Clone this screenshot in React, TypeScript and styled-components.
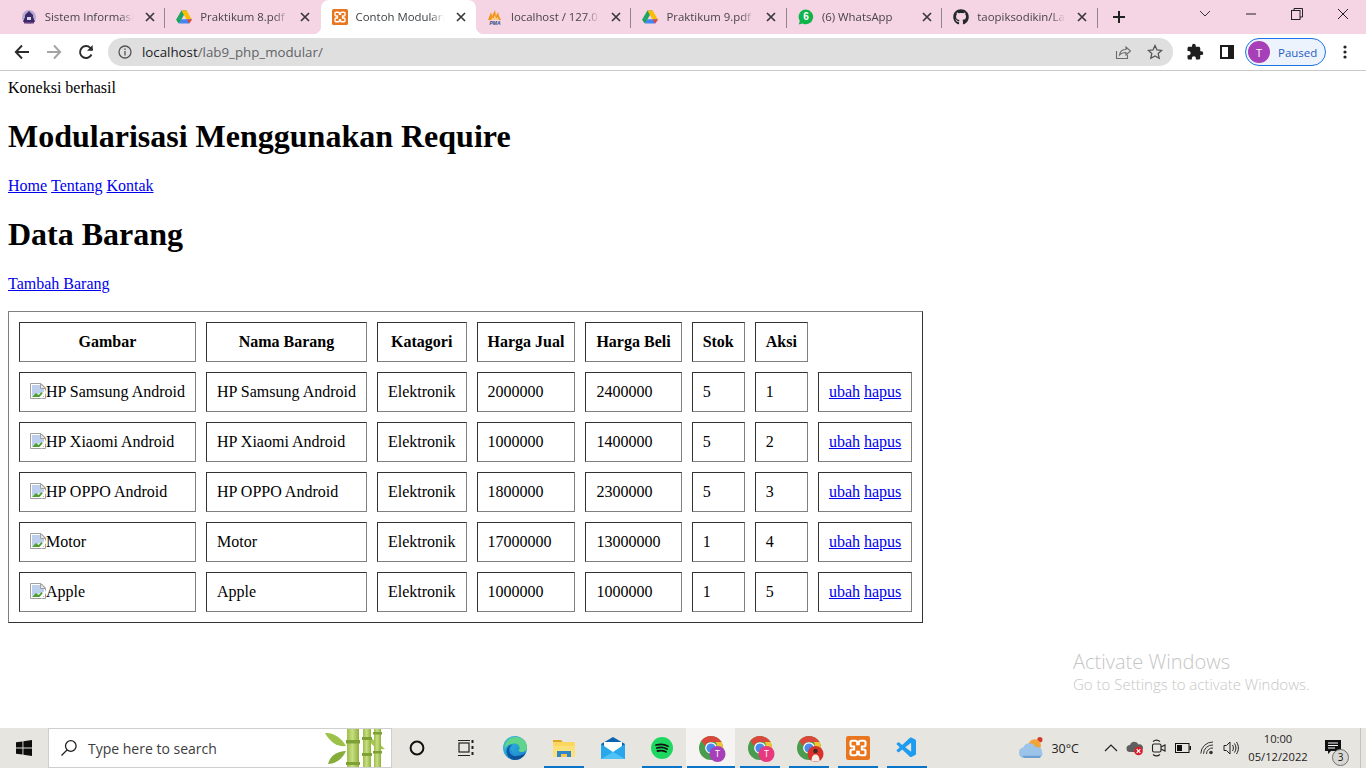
import React from "react";
import styled, { createGlobalStyle } from "styled-components";
import { FaGithub } from "react-icons/fa";
import { MdExtension } from "react-icons/md";
import { VscVscode } from "react-icons/vsc";

const UI = `"Open Sans", "Noto Sans", "Liberation Sans", sans-serif`;

const Global = createGlobalStyle`
  html, body { margin: 0; padding: 0; height: 100%; overflow: hidden; background: #fff; }
  #root { height: 100%; }
`;

const Screen = styled.div`
  position: relative;
  display: flex;
  flex-direction: column;
  width: 1366px;
  height: 768px;
  overflow: hidden;
`;

const TabStrip = styled.div`
  display: flex;
  align-items: stretch;
  height: 34px;
  padding-left: 9.7px;
  background: #f5d4e4;
  font-family: ${UI};
`;

const Tab = styled.div<{ $active?: boolean; $sep?: boolean }>`
  position: relative;
  flex: 0 0 155.45px;
  min-width: 0;
  box-sizing: border-box;
  display: flex;
  align-items: center;
  padding: 0 7.45px 0 11px;
  gap: 8px;
  background: ${(p) => (p.$active ? "#fff" : "transparent")};
  border-radius: 8px 8px 0 0;
  ${(p) =>
    p.$sep
      ? `&::after { content: ""; position: absolute; right: 0; top: 8px; width: 1px; height: 20px; background: #8f868b; }`
      : ""}
  ${(p) =>
    p.$active
      ? `&::before { content: ""; position: absolute; left: -8px; right: -8px; bottom: 0; height: 8px; z-index: 0;
           background:
             radial-gradient(circle at 0 0, #f5d4e4 8px, #fff 8.5px) left bottom / 8px 8px no-repeat,
             radial-gradient(circle at 100% 0, #f5d4e4 8px, #fff 8.5px) right bottom / 8px 8px no-repeat; }`
      : ""}
`;

const TabTitle = styled.span<{ $active?: boolean }>`
  position: relative;
  z-index: 1;
  flex: 1;
  min-width: 0;
  overflow: hidden;
  white-space: nowrap;
  font-size: 11.4px;
  line-height: 16px;
  color: ${(p) => (p.$active ? "#3c4043" : "#48444c")};
  -webkit-mask-image: linear-gradient(90deg, #000 84%, transparent 99%);
  mask-image: linear-gradient(90deg, #000 84%, transparent 99%);
`;

const IconSlot = styled.span`
  position: relative;
  z-index: 1;
  flex: 0 0 16px;
  width: 16px;
  height: 16px;
  display: flex;
  align-items: center;
  justify-content: center;
`;

const NewTab = styled.div`
  flex: 0 0 42px;
  display: flex;
  align-items: center;
  justify-content: center;
`;

const WindowControls = styled.div`
  margin-left: auto;
  display: flex;
  align-items: flex-start;
`;

const WindowButton = styled.div`
  width: 46px;
  height: 28px;
  display: flex;
  align-items: center;
  justify-content: center;
`;

const Toolbar = styled.div`
  flex: 0 0 37px;
  box-sizing: border-box;
  height: 37px;
  display: flex;
  align-items: flex-start;
  padding-top: 4px;
  background: #fff;
  border-bottom: 1px solid #c9c9c9;
  font-family: ${UI};
`;

const NavButton = styled.div`
  flex: 0 0 32px;
  height: 28px;
  display: flex;
  align-items: center;
  justify-content: center;
`;

const NavGroup = styled.div`
  display: flex;
  padding-left: 6px;
  width: 102px;
`;

const Omnibox = styled.div`
  flex: 0 0 1065px;
  height: 28px;
  box-sizing: border-box;
  display: flex;
  align-items: center;
  padding: 0 2px 0 10px;
  background: #dfdfdf;
  border-radius: 14px;
`;

const Url = styled.span`
  flex: 1;
  margin-left: 10px;
  font-size: 13.3px;
  color: #5f6368;
  white-space: nowrap;
`;

const UrlHost = styled.span`
  color: #202124;
`;

const OmniAction = styled.div`
  width: 32px;
  height: 28px;
  display: flex;
  align-items: center;
  justify-content: center;
`;

const ToolGroup = styled.div`
  display: flex;
  align-items: center;
  padding-left: 6px;
`;

const ProfilePill = styled.div`
  margin-left: 2px;
  width: 81px;
  height: 28px;
  box-sizing: border-box;
  display: flex;
  align-items: center;
  gap: 8px;
  padding-left: 2px;
  background: #ecf3fc;
  border: 1px solid #1a73e8;
  border-radius: 14px;
  font-size: 11.5px;
  color: #1f5fbf;
`;

const Avatar = styled.span<{ $bg: string; $size: number }>`
  width: ${(p) => p.$size}px;
  height: ${(p) => p.$size}px;
  flex: 0 0 auto;
  border-radius: 50%;
  background: ${(p) => p.$bg};
  color: #fff;
  font-size: ${(p) => Math.round(p.$size * 0.52)}px;
  display: flex;
  align-items: center;
  justify-content: center;
`;

const MenuButton = styled.div`
  margin-left: 3px;
  width: 32px;
  height: 28px;
  display: flex;
  align-items: center;
  justify-content: center;
`;

const Page = styled.main`
  flex: 1;
  padding: 8px;
  background: #fff;
  color: #000;
  font-family: "Liberation Serif", "Times New Roman", serif;
  font-size: 16px;
`;

const Notice = styled.div``;

const Heading = styled.h1`
  font-size: 32px;
  font-weight: 700;
  margin: 21.44px 0;
`;

const Nav = styled.nav`
  display: flex;
  gap: 4px;
`;

const TextLink = styled.a`
  color: #0000ee;
  text-decoration: underline;
`;

const AddRow = styled.div`
  margin-bottom: 18px;
`;

const DataTable = styled.table`
  border-collapse: separate;
  border-spacing: 10px;
  border-style: solid;
  border-width: 1px;
  border-color: #808080 #333 #333 #808080;
`;

const HeadCell = styled.th`
  padding: 10px;
  font-weight: 700;
  text-align: center;
  border-style: solid;
  border-width: 1px;
  border-color: #333 #808080 #808080 #333;
`;

const Cell = styled.td`
  padding: 10px;
  white-space: nowrap;
  border-style: solid;
  border-width: 1px;
  border-color: #333 #808080 #808080 #333;
`;

const LinkPair = styled.span`
  display: inline-flex;
  gap: 4px;
`;

const Broken = styled.svg`
  width: 16px;
  height: 16px;
  vertical-align: -2px;
`;

const Watermark = styled.div`
  position: absolute;
  left: 1073px;
  top: 649px;
  color: #c6c6c6;
  font-family: ${UI};
  font-weight: 300;
`;

const WatermarkTitle = styled.div`
  font-size: 20px;
  line-height: 26px;
`;

const WatermarkSub = styled.div`
  font-size: 15px;
  line-height: 19px;
`;

const Taskbar = styled.footer`
  flex: 0 0 40px;
  height: 40px;
  display: flex;
  align-items: stretch;
  background: #e7e5e0;
  font-family: ${UI};
`;

const StartButton = styled.div`
  flex: 0 0 48px;
  display: flex;
  align-items: center;
  justify-content: center;
`;

const SearchBox = styled.div`
  position: relative;
  flex: 0 0 344px;
  box-sizing: border-box;
  display: flex;
  align-items: center;
  gap: 10px;
  padding-left: 11px;
  background: #fff;
  border: 1px solid #cfcfcf;
  overflow: hidden;
  font-size: 14px;
  color: #3d3d3d;
`;

const Bamboo = styled.svg`
  position: absolute;
  right: 4px;
  top: 0;
`;

const TaskSlot = styled.div<{ $active?: boolean; $open?: boolean }>`
  position: relative;
  flex: 0 0 49px;
  display: flex;
  align-items: center;
  justify-content: center;
  background: ${(p) => (p.$active ? "#f5f4f2" : "transparent")};
  ${(p) =>
    p.$open
      ? `&::after { content: ""; position: absolute; bottom: 0; height: 2px; left: ${p.$active ? 1 : 5}px; right: ${p.$active ? 0 : 4}px; background: #0a74c9; }`
      : ""}
`;

const Tray = styled.div`
  margin-left: auto;
  display: flex;
  align-items: center;
`;

const Weather = styled.div`
  display: flex;
  align-items: center;
  gap: 8px;
  margin-right: 20px;
  font-size: 12.5px;
  color: #222;
`;

const TrayIcon = styled.div`
  width: 24px;
  height: 40px;
  display: flex;
  align-items: center;
  justify-content: center;
`;

const Clock = styled.div`
  width: 80px;
  margin: 0 7px 0 -5px;
  text-align: center;
  font-size: 11.2px;
  line-height: 18px;
  color: #222;
`;

const Notification = styled.div`
  position: relative;
  width: 35px;
  height: 100%;
  border-right: 1px solid #c4c2be;
  margin-right: 5px;
`;

const NotifyBadge = styled.span`
  position: absolute;
  left: 7px;
  top: 21px;
  width: 15px;
  height: 15px;
  border-radius: 50%;
  background: #d9d7d3;
  border: 1px solid #6f6f6f;
  font-size: 10px;
  line-height: 15px;
  text-align: center;
  color: #111;
`;

const NotifyGlyph = styled.svg`
  position: absolute;
  left: 0;
  top: 12px;
`;

const Close = () => (
  <svg width="16" height="16" viewBox="0 0 16 16">
    <path d="M4 4l8 8M12 4l-8 8" stroke="#3a383c" strokeWidth="1.7" />
  </svg>
);

const Campus = () => (
  <svg width="16" height="16" viewBox="0 0 16 16">
    <circle cx="8" cy="8" r="7" fill="#b7a9cf" />
    <path d="M8 2l4 4v2l2 5H2l2-5V6z" fill="#3b2a6b" />
    <path d="M6 8h4v3H6z" fill="#d9d3e6" />
    <path d="M3 13h10v1.5H3z" fill="#6a3d7c" />
  </svg>
);

const Drive = () => (
  <svg width="16" height="16" viewBox="0 0 16 16">
    <path d="M5.4 1.5h5.2L5.200 10.700H0z" fill="#1fa463" />
    <path d="M5.4 1.5h5.2L16 10.700h-5.300z" fill="#fbbc04" />
    <path d="M3 14.500h10l3-4.300H5.400z" fill="#4285f4" />
    <path d="M0 10.500L2.700 14.500 5.600 10.500z" fill="#0f9d58" />
    <path d="M10.600 10.400h5.400l-2.800 4.100z" fill="#ea4335" />
  </svg>
);

const Xampp = ({ s = 16 }: { s?: number }) => (
  <svg width={s} height={s} viewBox="0 0 16 16">
    <rect width="16" height="16" rx="1.500" fill="#e8761f" />
    <path
      d="M4 3.200h2.200a1.300 1.300 0 0 1 1.300 1.200v1h1v-1a1.300 1.300 0 0 1 1.300-1.200H12a1 1 0 0 1 1 1v1.600a1.200 1.200 0 0 1-1.200 1.200H10.600v2h1.200a1.200 1.200 0 0 1 1.200 1.200v1.600a1 1 0 0 1-1 1H9.800a1.300 1.300 0 0 1-1.300-1.200v-1h-1v1a1.300 1.300 0 0 1-1.300 1.200H4a1 1 0 0 1-1-1v-1.600A1.200 1.200 0 0 1 4.200 9h1.200V7H4.200A1.200 1.200 0 0 1 3 5.800V4.200a1 1 0 0 1 1-1z"
      fill="none"
      stroke="#fff"
      strokeWidth="1.400"
    />
  </svg>
);

const Pma = () => (
  <svg width="16" height="16" viewBox="0 0 16 16">
    <path d="M1 11L4 3l1 4 3-6 1 6 2-4 1 4 2 4z" fill="#f29419" />
    <path d="M4 11l1.500-3 1 1.500L8 6l1 3.500L10.500 8l1.500 3z" fill="#fbd08a" />
    <text x="8" y="15.500" fontSize="5" fontWeight="700" fontStyle="italic" textAnchor="middle" fill="#2b4a7e" fontFamily="Liberation Sans, sans-serif">PMA</text>
  </svg>
);

const WhatsApp = () => (
  <svg width="16" height="16" viewBox="0 0 16 16">
    <path d="M8 .6a7.300 7.300 0 0 0-6.200 11.200L.8 15.400l3.700-1A7.300 7.300 0 1 0 8 .6z" fill="#0fb44a" />
    <text x="8" y="11.300" fontSize="10" fontWeight="700" textAnchor="middle" fill="#fff" fontFamily="Liberation Sans, sans-serif">6</text>
  </svg>
);

const BrokenImage = () => (
  <Broken viewBox="0 0 16 16">
    <path d="M.5.500h10.500l4.500 4.500v10.500H.5z" fill="#fff" stroke="#a0a0a0" />
    <path d="M2 2h8l4 4v3l-4 1-8 3z" fill="#bcd0ee" />
    <path d="M2 14l4-4 2.500 2 3-3 2.500 2.500V14z" fill="#4f9e34" />
    <path d="M10.500 .5v5h5z" fill="#e8e8e8" stroke="#a0a0a0" />
    <path d="M9 14.500l6.500-7.500.5 3-4 5.500z" fill="#fff" />
  </Broken>
);

const Windows = () => (
  <svg width="16" height="16" viewBox="0 0 16 16">
    <path d="M0 2.300l6.500-.9v6.100H0zM7.400 1.300L16 0v7.500H7.400zM0 8.400h6.500v6.200L0 13.700zM7.400 8.400H16V16l-8.600-1.200z" fill="#0d0d0d" />
  </svg>
);

const Edge = () => (
  <svg width="24" height="24" viewBox="0 0 24 24">
    <defs>
      <linearGradient id="edgeA" x1="0" y1="0" x2="1" y2="1">
        <stop offset="0" stopColor="#35c1d8" />
        <stop offset="1" stopColor="#1b7fd1" />
      </linearGradient>
      <linearGradient id="edgeB" x1="0" y1="0" x2="1" y2="0">
        <stop offset="0" stopColor="#0c59a4" />
        <stop offset="1" stopColor="#114a8b" />
      </linearGradient>
    </defs>
    <circle cx="12" cy="12" r="12" fill="url(#edgeA)" />
    <path d="M13 1c6 0 11 4.500 11 10.500 0 3-2.500 4.500-5 4.500-2 0-3.500-.6-3.500-1.500 2-1 1.600-7-4-7C7 7.500 3 10 1.500 13 1 6 6 1 13 1z" fill="#5fd48a" />
    <path d="M22.500 17c-2 4-6 7-10.500 7-5 0-8.500-4-8.500-9 0-3 2.500-6.500 6-6.500-2 2-2.200 5.500-.5 8 2 3 7 5 13.500.5z" fill="url(#edgeB)" />
    <path d="M9.500 8.500c-2 2-2.200 5.500-.5 8 1 1.500 3 3 6 3.300-4 1.500-7.500-1-8.500-4C5.700 12.500 7 9.500 9.500 8.500z" fill="#2596df" />
  </svg>
);

const Folder = () => (
  <svg width="22" height="22" viewBox="0 0 22 22">
    <path d="M0 3h8l2 2.500H0z" fill="#e0a526" />
    <rect x="0" y="5" width="22" height="15" rx="1" fill="#fbd75f" />
    <path d="M0 9h22v11H0z" fill="#fce07a" />
    <path d="M4 14h14v6h-4v-3H8v3H4z" fill="#2f86c9" />
    <path d="M8 17h6v3H8z" fill="#f5c84a" />
  </svg>
);

const Mail = () => (
  <svg width="24" height="22" viewBox="0 0 24 22">
    <path d="M0 7L12 0l12 7v15H0z" fill="#0b63ad" />
    <path d="M3 5h18v8l-9 5-9-5z" fill="#fff" />
    <path d="M0 7l12 8 12-8v15H0z" fill="#28a8ea" />
    <path d="M0 22L12 15l12 7z" fill="#4fc3f7" />
  </svg>
);

const Spotify = () => (
  <svg width="22" height="22" viewBox="0 0 22 22">
    <circle cx="11" cy="11" r="11" fill="#1ed760" />
    <path d="M5 8c4-1 8.500-.8 12 1.200M5.800 11c3.500-.9 7.200-.6 10.200 1M6.500 14c3-.7 6-.5 8.500.8" stroke="#111" strokeWidth="1.800" strokeLinecap="round" fill="none" />
  </svg>
);

const ChromeBase = ({ children }: { children?: React.ReactNode }) => (
  <svg width="30" height="30" viewBox="0 0 30 30">
    <g transform="translate(3 3) scale(1.043)">
      <circle cx="11.500" cy="11.500" r="11.500" fill="#4a9d4e" />
      <path d="M11.500 0a11.500 11.500 0 0 1 10 5.800H11.500a5.700 5.700 0 0 0-5.500 4L2.300 4.600A11.500 11.500 0 0 1 11.500 0z" fill="#d9483b" />
      <path d="M21.500 5.800A11.500 11.500 0 0 1 16 21.800l-4-7a5.700 5.700 0 0 0 4-9z" fill="#f3c331" />
      <circle cx="11.500" cy="11.500" r="5.600" fill="#fff" />
      <circle cx="11.500" cy="11.500" r="4.400" fill="#4a8af0" />
    </g>
    {children}
  </svg>
);

const ChromeUser = ({ bg }: { bg: string }) => (
  <ChromeBase>
    <circle cx="21.500" cy="21" r="8" fill={bg} />
    <text x="21.500" y="24.200" fontSize="9" fontFamily="Open Sans, sans-serif" textAnchor="middle" fill="#fff">T</text>
  </ChromeBase>
);

const ChromePhoto = () => (
  <ChromeBase>
    <circle cx="21.500" cy="21" r="8" fill="#d8322a" />
    <circle cx="21.500" cy="18" r="2.200" fill="#3a2a24" />
    <path d="M17.500 28.500c0-5 1.500-7 4-7s4 2 4 7z" fill="#f4efe8" />
  </ChromeBase>
);

const Weathery = () => (
  <svg width="24" height="24" viewBox="1 0 23 23">
    <circle cx="21" cy="3.500" r="2.500" fill="#d33a2c" />
    <circle cx="16" cy="9" r="6" fill="#f2a43a" />
    <path d="M6 21a5 5 0 0 1-1-9.900A6.500 6.500 0 0 1 17 11a4.300 4.300 0 0 1 6 4 4.800 4.800 0 0 1-2 6z" fill="#9cc3e8" />
    <path d="M4 19h18l-1 2H6z" fill="#6d9fd3" />
  </svg>
);

const TrayCloud = () => (
  <svg width="18" height="16" viewBox="0 0 18 16">
    <path d="M4 12a3.500 3.500 0 0 1 0-7 4.500 4.500 0 0 1 8.500-.5A3.500 3.500 0 0 1 15 11l-3 1z" fill="#5f5f5f" />
    <circle cx="12.500" cy="11" r="4.300" fill="#d6202a" />
    <path d="M10.700 9.200l3.600 3.600M14.300 9.200l-3.600 3.600" stroke="#fff" strokeWidth="1.200" />
  </svg>
);

const MeetNow = () => (
  <svg width="16" height="18" viewBox="0 0 16 18" fill="none" stroke="#222" strokeWidth="1.100">
    <rect x="1.500" y="5" width="8.500" height="8" rx="1.500" />
    <path d="M10 8l4-2v6l-4-2" />
    <path d="M2 2.500c2-1.600 5-1.600 7 0M2 15.500c2 1.600 5 1.600 7 0" />
  </svg>
);

const Battery = () => (
  <svg width="16" height="10" viewBox="0 0 16 10">
    <rect x=".5" y=".5" width="13.500" height="9" fill="none" stroke="#111" />
    <rect x="2" y="2" width="5" height="6" fill="#111" />
    <rect x="14.500" y="3" width="1.500" height="4" fill="#111" />
  </svg>
);

const Wifi = () => (
  <svg width="14" height="14" viewBox="0 0 14 14" fill="none" stroke="#333" strokeWidth="1">
    <path d="M.8 12.500A12 12 0 0 1 13 1" />
    <path d="M3.500 12.800A9 9 0 0 1 13 4" />
    <path d="M6.500 13A6 6 0 0 1 13 7" />
    <circle cx="11" cy="11.500" r="1.800" fill="#333" stroke="none" />
  </svg>
);

const Volume = () => (
  <svg width="16" height="16" viewBox="0 0 16 16" fill="none" stroke="#222" strokeWidth="1">
    <path d="M1 5.500h2.500L7 2v12l-3.500-3.500H1z" />
    <path d="M9.500 5c1.200 1.800 1.200 4.200 0 6M11.500 3.500c1.900 2.700 1.900 6.300 0 9M13.500 2c2.500 3.700 2.500 8.300 0 12" />
  </svg>
);

const tabs = [
  { icon: <Campus />, title: "Sistem Informasi Akademik", sep: true },
  { icon: <Drive />, title: "Praktikum 8.pdf - Google Drive" },
  { icon: <Xampp />, title: "Contoh Modularisasi", active: true },
  { icon: <Pma />, title: "localhost / 127.0.0.1 / latihan", sep: true },
  { icon: <Drive />, title: "Praktikum 9.pdf - Google Drive", sep: true },
  { icon: <WhatsApp />, title: "(6) WhatsApp", sep: true },
  { icon: <FaGithub size={16} color="#24292e" />, title: "taopiksodikin/Lab9_Web", sep: true },
];

const rows = [
  ["HP Samsung Android", "2000000", "2400000", "5", "1"],
  ["HP Xiaomi Android", "1000000", "1400000", "5", "2"],
  ["HP OPPO Android", "1800000", "2300000", "5", "3"],
  ["Motor", "17000000", "13000000", "1", "4"],
  ["Apple", "1000000", "1000000", "1", "5"],
];

const headers = ["Gambar", "Nama Barang", "Katagori", "Harga Jual", "Harga Beli", "Stok", "Aksi"];

export default function App() {
  return (
    <Screen>
      <Global />
      <TabStrip>
        {tabs.map((t) => (
          <Tab key={t.title} $active={t.active} $sep={t.sep}>
            <IconSlot>{t.icon}</IconSlot>
            <TabTitle $active={t.active}>{t.title}</TabTitle>
            <IconSlot>
              <Close />
            </IconSlot>
          </Tab>
        ))}
        <NewTab>
          <svg width="14" height="14" viewBox="0 0 14 14">
            <path d="M7 1v12M1 7h12" stroke="#222" strokeWidth="2" />
          </svg>
        </NewTab>
        <WindowControls>
          <WindowButton>
            <svg width="12" height="8" viewBox="0 0 12 8" fill="none" stroke="#333" strokeWidth="1">
              <path d="M1 1l5 5 5-5" />
            </svg>
          </WindowButton>
          <WindowButton>
            <svg width="12" height="2" viewBox="0 0 12 2">
              <path d="M1 1h10" stroke="#222" strokeWidth="1" />
            </svg>
          </WindowButton>
          <WindowButton>
            <svg width="12" height="12" viewBox="0 0 12 12" fill="none" stroke="#222" strokeWidth="1">
              <rect x=".5" y="2.500" width="8.500" height="9" />
              <path d="M3 2.500V.5h8.500v8.500H9" />
            </svg>
          </WindowButton>
          <WindowButton>
            <svg width="12" height="12" viewBox="0 0 12 12" fill="none" stroke="#222" strokeWidth="1">
              <path d="M1 1l10 10M11 1L1 11" />
            </svg>
          </WindowButton>
        </WindowControls>
      </TabStrip>

      <Toolbar>
        <NavGroup>
          <NavButton>
            <svg width="16" height="16" viewBox="0 0 16 16" fill="none" stroke="#2b2b2b" strokeWidth="1.900">
              <path d="M15 8H2M8 1.500L1.800 8 8 14.500" />
            </svg>
          </NavButton>
          <NavButton>
            <svg width="16" height="16" viewBox="0 0 16 16" fill="none" stroke="#a4a4a4" strokeWidth="1.900">
              <path d="M1 8h13M8 1.500L14.200 8 8 14.500" />
            </svg>
          </NavButton>
          <NavButton>
            <svg width="16" height="16" viewBox="0 0 16 16" fill="none" stroke="#2b2b2b" strokeWidth="1.900">
              <path d="M13.500 10.500A6 6 0 1 1 12.300 3.800L14.500 6" />
              <path d="M14.700 1v5.700H9" fill="#2b2b2b" stroke="none" />
            </svg>
          </NavButton>
        </NavGroup>
        <Omnibox>
          <svg width="14" height="14" viewBox="0 0 14 14" fill="none" stroke="#555" strokeWidth="1.300">
            <circle cx="7" cy="7" r="6" />
            <path d="M7 6v4.500M7 3.500v1.400" />
          </svg>
          <Url>
            <UrlHost>localhost</UrlHost>/lab9_php_modular/
          </Url>
          <OmniAction>
            <svg width="16" height="16" viewBox="0 0 16 16" fill="none" stroke="#6a6a6a" strokeWidth="1.100">
              <path d="M1.500 7v7.500h11V11" />
              <path d="M4.500 11c.5-3.500 3-5.500 6.500-5.500V3l4.500 4-4.500 4V8.500c-2.500 0-5 .8-6.500 2.500z" />
            </svg>
          </OmniAction>
          <OmniAction>
            <svg width="16" height="16" viewBox="0 0 16 16" fill="none" stroke="#555" strokeWidth="1.300">
              <path d="M8 1.500l2 4.400 4.700.5-3.500 3.200 1 4.700L8 11.900l-4.200 2.400 1-4.700L1.300 6.400 6 5.900z" />
            </svg>
          </OmniAction>
        </Omnibox>
        <ToolGroup>
          <NavButton>
            <MdExtension size={18} color="#1f1f1f" />
          </NavButton>
          <NavButton>
            <svg width="14" height="14" viewBox="0 0 14 14">
              <rect x="1" y="1" width="12" height="12" fill="#fff" stroke="#1c1c1c" strokeWidth="2" />
              <rect x="8" y="1" width="5" height="12" fill="#1c1c1c" />
            </svg>
          </NavButton>
          <ProfilePill>
            <Avatar $bg="#a73fb8" $size={22}>
              T
            </Avatar>
            Paused
          </ProfilePill>
          <MenuButton>
            <svg width="4" height="14" viewBox="0 0 4 14">
              <circle cx="2" cy="2" r="1.600" fill="#222" />
              <circle cx="2" cy="7" r="1.600" fill="#222" />
              <circle cx="2" cy="12" r="1.600" fill="#222" />
            </svg>
          </MenuButton>
        </ToolGroup>
      </Toolbar>

      <Page>
        <Notice>Koneksi berhasil</Notice>
        <Heading>Modularisasi Menggunakan Require</Heading>
        <Nav>
          <TextLink href="#">Home</TextLink>
          <TextLink href="#">Tentang</TextLink>
          <TextLink href="#">Kontak</TextLink>
        </Nav>
        <Heading>Data Barang</Heading>
        <AddRow>
          <TextLink href="#">Tambah Barang</TextLink>
        </AddRow>
        <DataTable>
          <thead>
            <tr>
              {headers.map((h) => (
                <HeadCell key={h}>{h}</HeadCell>
              ))}
            </tr>
          </thead>
          <tbody>
            {rows.map((r) => (
              <tr key={r[0]}>
                <Cell>
                  <BrokenImage />
                  {r[0]}
                </Cell>
                <Cell>{r[0]}</Cell>
                <Cell>Elektronik</Cell>
                <Cell>{r[1]}</Cell>
                <Cell>{r[2]}</Cell>
                <Cell>{r[3]}</Cell>
                <Cell>{r[4]}</Cell>
                <Cell>
                  <LinkPair>
                    <TextLink href="#">ubah</TextLink>
                    <TextLink href="#">hapus</TextLink>
                  </LinkPair>
                </Cell>
              </tr>
            ))}
          </tbody>
        </DataTable>
      </Page>

      <Watermark>
        <WatermarkTitle>Activate Windows</WatermarkTitle>
        <WatermarkSub>Go to Settings to activate Windows.</WatermarkSub>
      </Watermark>

      <Taskbar>
        <StartButton>
          <Windows />
        </StartButton>
        <SearchBox>
          <svg width="18" height="18" viewBox="0 0 18 18" fill="none" stroke="#222" strokeWidth="1.300">
            <circle cx="10.800" cy="7" r="5.300" />
            <path d="M7 11L1.500 16.500" />
          </svg>
          Type here to search
          <Bamboo width="62" height="40" viewBox="0 0 62 40">
            <defs>
              <linearGradient id="stem" x1="0" y1="0" x2="1" y2="0">
                <stop offset="0" stopColor="#9dbd48" />
                <stop offset="0.45" stopColor="#c8de82" />
                <stop offset="1" stopColor="#8fb03a" />
              </linearGradient>
            </defs>
            <path d="M0 4c8-1 17 5 21 13C12 18 5 13 0 4z" fill="#9cc24a" />
            <path d="M3 35c2-8 9-13 18-13-3 7-10 13-18 13z" fill="#86ad3a" />
            <path d="M46 9c4 3 10 7 14 11-7 1-13-3-15-8z" fill="#a5c653" />
            <rect x="22" y="0" width="12" height="40" fill="url(#stem)" />
            <rect x="38" y="0" width="8" height="40" fill="url(#stem)" />
            <rect x="49" y="0" width="7" height="40" fill="url(#stem)" />
            <path d="M21 11h14v3.500H21zM21 33h14v3H21zM37 8h10v3H37zM37 24h10v3H37zM48 3h9v2.500h-9zM48 22h9v2.500h-9z" fill="#7ea136" />
          </Bamboo>
        </SearchBox>
        <TaskSlot>
          <svg width="16" height="16" viewBox="0 0 16 16">
            <circle cx="8" cy="8" r="6.400" fill="none" stroke="#111" strokeWidth="2" />
          </svg>
        </TaskSlot>
        <TaskSlot>
          <svg width="18" height="18" viewBox="0 0 18 18" fill="none" stroke="#222" strokeWidth="1.200">
            <rect x="2" y="4" width="10" height="9" />
            <path d="M1 1.500h12M1 16.500h12" />
            <path d="M15.500 1v3M15.500 7v3M15.500 13v3" strokeWidth="2" />
          </svg>
        </TaskSlot>
        <TaskSlot>
          <Edge />
        </TaskSlot>
        <TaskSlot $open>
          <Folder />
        </TaskSlot>
        <TaskSlot>
          <Mail />
        </TaskSlot>
        <TaskSlot $open>
          <Spotify />
        </TaskSlot>
        <TaskSlot $open $active>
          <ChromeUser bg="#a73fb8" />
        </TaskSlot>
        <TaskSlot $open>
          <ChromeUser bg="#e8397f" />
        </TaskSlot>
        <TaskSlot $open>
          <ChromePhoto />
        </TaskSlot>
        <TaskSlot $open>
          <Xampp s={24} />
        </TaskSlot>
        <TaskSlot $open>
          <VscVscode size={24} color="#1f9cf0" />
        </TaskSlot>
        <Tray>
          <Weather>
            <Weathery />
            30°C
          </Weather>
          <TrayIcon>
            <svg width="14" height="8" viewBox="0 0 14 8" fill="none" stroke="#222" strokeWidth="1.200">
              <path d="M1 7l6-6 6 6" />
            </svg>
          </TrayIcon>
          <TrayIcon>
            <TrayCloud />
          </TrayIcon>
          <TrayIcon>
            <MeetNow />
          </TrayIcon>
          <TrayIcon>
            <Battery />
          </TrayIcon>
          <TrayIcon>
            <Wifi />
          </TrayIcon>
          <TrayIcon>
            <Volume />
          </TrayIcon>
          <Clock>
            10:00
            <br />
            05/12/2022
          </Clock>
          <Notification>
            <NotifyGlyph width="16" height="16" viewBox="0 0 16 16">
              <path d="M0 0h16v11H6l-3 3v-3H0z" fill="#111" />
              <path d="M3 3h10M3 5.500h10M3 8h7" stroke="#fff" strokeWidth="1" />
            </NotifyGlyph>
            <NotifyBadge>3</NotifyBadge>
          </Notification>
        </Tray>
      </Taskbar>
    </Screen>
  );
}
